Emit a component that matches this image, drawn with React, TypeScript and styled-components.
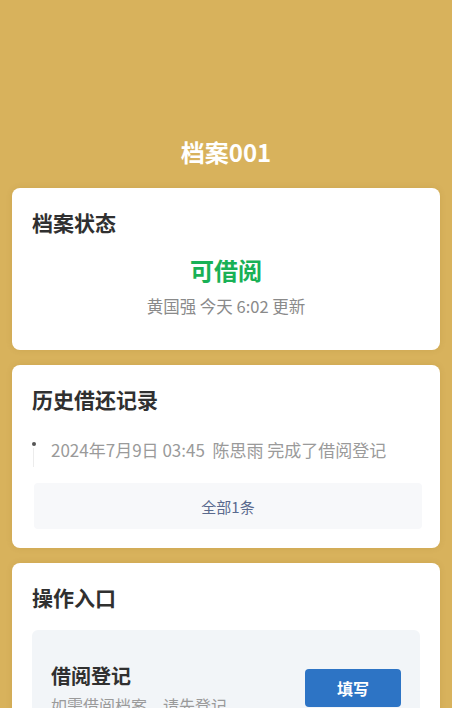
import React from "react";
import styled, { createGlobalStyle } from "styled-components";

const Global = createGlobalStyle`
  html, body {
    margin: 0;
    padding: 0;
    background: #d8b25c;
  }
  body {
    font-family: "Noto Sans CJK SC", "Noto Sans", sans-serif;
    -webkit-font-smoothing: antialiased;
  }
  * { box-sizing: border-box; }
`;

const Page = styled.div`
  min-height: 708px;
  background: #d8b25c;
  padding: 134px 12px 0;
  display: flex;
  flex-direction: column;
  gap: 15px;
`;

const PageTitle = styled.h1`
  margin: 0 0 3px;
  text-align: center;
  color: #ffffff;
  font-size: 24px;
  font-weight: 700;
  line-height: 36px;
`;

const Card = styled.section<{ $pb?: number }>`
  background: #ffffff;
  border-radius: 8px;
  padding: 19px 20px ${(p) => p.$pb ?? 20}px;
  box-shadow: 0 0 6px rgba(120, 90, 20, 0.12);
  display: flex;
  flex-direction: column;
`;

const CardTitle = styled.h2`
  margin: 0;
  font-size: 21px;
  font-weight: 700;
  line-height: 30px;
  color: #303030;
`;

const Status = styled.div`
  margin-top: 16px;
  text-align: center;
  font-size: 24px;
  font-weight: 700;
  line-height: 34px;
  color: #19b156;
`;

const Meta = styled.div`
  margin-top: 7px;
  text-align: center;
  font-size: 16.5px;
  line-height: 24px;
  color: #8a8a8a;
`;

const Timeline = styled.div`
  margin-top: 23px;
  display: flex;
  gap: 16px;
`;

const Rail = styled.div`
  width: 3px;
  display: flex;
  flex-direction: column;
  align-items: center;
  padding-top: 5px;
  margin-bottom: -4px;
`;

const Dot = styled.span`
  width: 4px;
  height: 4px;
  border-radius: 50%;
  background: #555;
  flex: none;
`;

const Line = styled.span`
  flex: 1;
  width: 1px;
  background: #ececec;
  margin-top: 2px;
`;

const EventText = styled.div`
  font-size: 17px;
  line-height: 26px;
  color: #9a9a9a;
  white-space: pre;
`;

const MoreButton = styled.button`
  margin: 20px -2px 0 2px;
  height: 46px;
  border: none;
  border-radius: 4px;
  background: #f7f8fa;
  color: #5a6a8e;
  font-family: inherit;
  font-size: 15px;
  cursor: pointer;
`;

const ActionBox = styled.div`
  margin-top: 18px;
  background: #f2f5f8;
  border-radius: 6px;
  padding: 32px 19px 20px;
  display: flex;
  align-items: flex-start;
  justify-content: space-between;
`;

const ActionInfo = styled.div`
  display: flex;
  flex-direction: column;
`;

const ActionTitle = styled.div`
  font-size: 20px;
  font-weight: 700;
  line-height: 28px;
  color: #303030;
`;

const ActionDesc = styled.div`
  margin-top: 3px;
  font-size: 16px;
  line-height: 24px;
  color: #9a9a9a;
`;

const FillButton = styled.button`
  margin-top: 7px;
  width: 96px;
  height: 38px;
  border: none;
  border-radius: 4px;
  background: #2d74c5;
  color: #ffffff;
  font-family: inherit;
  font-size: 16px;
  font-weight: 700;
  cursor: pointer;
`;

export default function App() {
  return (
    <>
      <Global />
      <Page>
        <PageTitle>档案001</PageTitle>
        <Card $pb={32}>
          <CardTitle>档案状态</CardTitle>
          <Status>可借阅</Status>
          <Meta>黄国强 今天 6:02 更新</Meta>
        </Card>
        <Card $pb={19}>
          <CardTitle>历史借还记录</CardTitle>
          <Timeline>
            <Rail>
              <Dot />
              <Line />
            </Rail>
            <EventText>{"2024年7月9日 03:45  陈思雨 完成了借阅登记"}</EventText>
          </Timeline>
          <MoreButton>全部1条</MoreButton>
        </Card>
        <Card>
          <CardTitle>操作入口</CardTitle>
          <ActionBox>
            <ActionInfo>
              <ActionTitle>借阅登记</ActionTitle>
              <ActionDesc>如需借阅档案，请先登记</ActionDesc>
            </ActionInfo>
            <FillButton>填写</FillButton>
          </ActionBox>
        </Card>
      </Page>
    </>
  );
}
